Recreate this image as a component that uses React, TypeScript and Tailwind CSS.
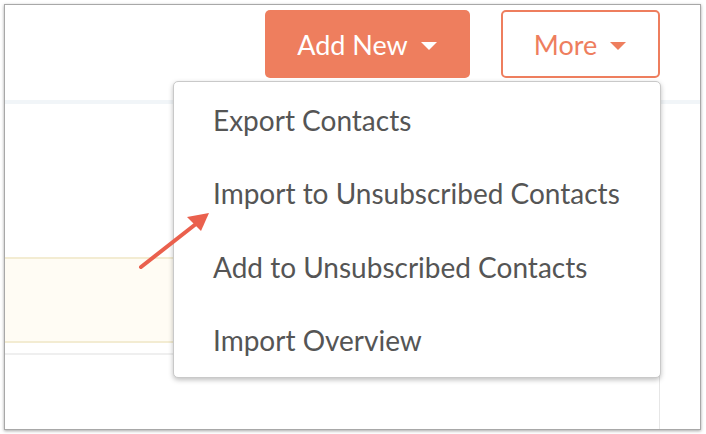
const menuItems = [
  'Export Contacts',
  'Import to Unsubscribed Contacts',
  'Add to Unsubscribed Contacts',
  'Import Overview',
];

function Caret({ className }: { className: string }) {
  return (
    <svg width="18" height="10" viewBox="0 0 18 10" className={className}>
      <path d="M1 1 L17 1 L9 9 Z" fill="currentColor" />
    </svg>
  );
}

export default function App() {
  return (
    <div className="w-[706px] h-[434px] bg-white pt-[4px] pl-[4px] font-['Lato',sans-serif]">
      <div className="relative w-[697px] h-[426px] border border-[#a8a8a8] shadow-[0_1px_3px_rgba(0,0,0,0.35)] flex flex-col overflow-hidden">
        {/* Header */}
        <div className="h-[95px] flex justify-end items-start pt-[5px] pr-[40px] gap-[31px]">
          <button className="w-[205px] h-[68px] rounded-[5px] bg-[#ee7e5e] text-white text-[27px] flex items-center justify-center gap-[12px] pt-[3px]">
            Add New
            <Caret className="text-white" />
          </button>
          <button className="w-[159px] h-[68px] rounded-[5px] border-2 border-[#ee7e5e] bg-white text-[#ee7e5e] text-[27px] flex items-center justify-center gap-[12px] pt-[3px]">
            More
            <Caret className="text-[#ee7e5e]" />
          </button>
        </div>
        <div className="h-[4px] bg-[#f1f5f8]" />

        {/* Content panel */}
        <div className="flex-1 mr-[40px] border-r border-[#e6e6e6] flex flex-col">
          <div className="h-[153px]" />
          <div className="h-[86px] bg-[#fffcf4] border-y-2 border-[#f3ecd2]" />
          <div className="h-[10px]" />
          <div className="h-[2px] bg-[#efefef]" />
        </div>

        {/* Dropdown menu */}
        <div className="absolute left-[168px] top-[76px] w-[488px] h-[297px] bg-white border border-[#c9c9c9] rounded-[5px] shadow-[0_2px_5px_rgba(0,0,0,0.25)] flex flex-col pt-[1px]">
          {menuItems.map((item) => (
            <div key={item} className="h-[74px] flex items-center pl-[39px] text-[28px] text-[#555555]">
              {item}
            </div>
          ))}
        </div>

        {/* Annotation arrow */}
        <svg className="absolute left-0 top-0 pointer-events-none" width="697" height="426">
          <line x1="136" y1="262" x2="196" y2="215" stroke="#ea604d" strokeWidth="4" strokeLinecap="round" />
          <path d="M204 208 L182 212 L196 226 Z" fill="#ea604d" />
        </svg>
      </div>
    </div>
  );
}
